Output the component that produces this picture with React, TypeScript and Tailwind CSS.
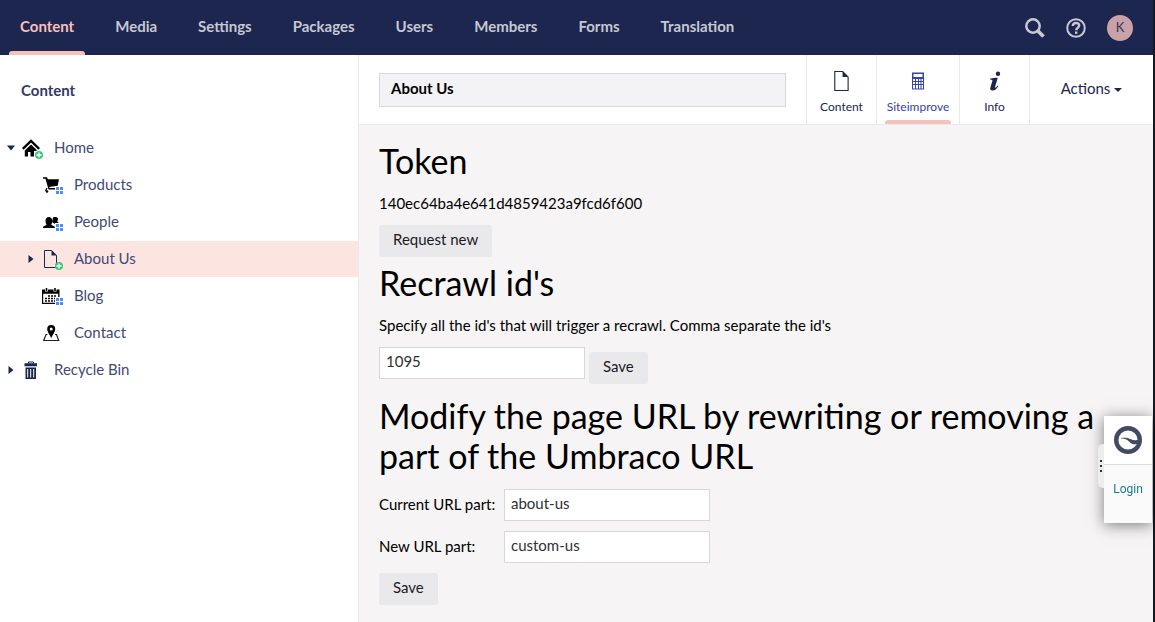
import React from "react";

type IconProps = { className?: string };

const HomeIcon = () => (
  <svg viewBox="0 0 18 18" className="size-[18px]">
    <path d="M.8 9.800 9 2l8.200 7.800" fill="none" stroke="#000" strokeWidth="2.400" />
    <path d="M9 5.500l5.500 5.200V12H12v5.500H8.500V13H6v4.500H2.800v-6Z" />
  </svg>
);
const CartIcon = () => (
  <svg viewBox="0 0 18 18" className="size-[18px]">
    <path d="M1 1.200h4l.8 2H17l-1.300 6.500-8.500 1.200.5 1.100H14v1.500H6.500L3.500 2.700H1Z" />
    <path d="M5 12l-1.500 3" stroke="#000" strokeWidth="1.200" />
    <circle cx="5" cy="15.500" r="1.300" />
  </svg>
);
const PeopleIcon = () => (
  <svg viewBox="0 0 18 18" className="size-[18px]">
    <path d="M11 4.500c2-1 4.800-.5 5 1.500.1 1.200-.7 2-.7 2.800.8.700 1.700.6 1.700 2.200h-4l-3-2Z" />
    <path d="M1 15c0-2.800 3.200-2.200 3.500-3.500C3 9.500 2.800 4 6.800 4S11 9.500 9.300 11.500c.2 1.300 3.700 1 3.700 3.500Z" />
  </svg>
);
const DocIcon = ({ className = "size-[18px]" }: IconProps) => (
  <svg viewBox="0 0 18 18" className={className}>
    <path d="M2.500.5h7l5 5v12h-12Z" fill="none" stroke="currentColor" />
    <path d="M9.500 0l5.500 5.500H9.500Z" fill="currentColor" />
  </svg>
);
const CalendarIcon = () => (
  <svg viewBox="0 0 18 18" className="size-[18px]">
    <path d="M0 2.500h17.500V17H0ZM1.200 6.800v9h15v-9Z" fillRule="evenodd" />
    <path d="M4.500 1v3.500M13 1v3.500" stroke="#fff" strokeWidth="3" />
    <path d="M4.500 1v3M13 1v3" stroke="#000" strokeWidth="1.600" />
    <path d="M6 9h9M3 11.500h12M3 14h12" stroke="#000" strokeWidth="1.600" strokeDasharray="2 1" />
  </svg>
);
const PinIcon = () => (
  <svg viewBox="0 0 18 18" className="size-[18px]">
    <path d="M5.500 10.500H4L1.700 16.500h15L14.500 10.500H13" fill="none" stroke="#222" strokeWidth="1.200" />
    <path d="M9.200 14.500C8.500 11.500 5.200 8.500 5.200 5a4 4 0 0 1 8 0c0 3.500-3.300 6.500-4 9.500Zm0-8a1.500 1.500 0 1 0 0-3 1.500 1.500 0 0 0 0 3Z" fillRule="evenodd" />
  </svg>
);
const TrashIcon = () => (
  <svg viewBox="0 0 18 18" className="size-[18px]">
    <path d="M6.500 2.500v-1.500h5v1.500" fill="none" stroke="currentColor" />
    <path d="M2.500 2.200h12.500v3H2.500ZM3.500 6.500h10.500V18H3.500ZM5.200 8v8.500h1V8Zm3 0v8.500h1V8Zm3 0v8.500h1V8Z" fill="currentColor" fillRule="evenodd" />
  </svg>
);
const CalculatorIcon = () => (
  <svg viewBox="0 0 18 18" className="size-[18px]">
    <path d="M3 .5h12v17H3ZM4.500 2v3h9V2ZM4 7v2h2V7Zm3 0v2h2V7Zm3 0v2h1.500V7Zm2.500 0v2H14V7ZM4 10v2h2v-2Zm3 0v2h2v-2Zm3 0v2h1.500v-2Zm2.500 0v2H14v-2ZM4 13v3.500h2V13Zm3 0v3.500h2V13Zm3 0v3.500h1.500V13Zm2.500 0v3.500H14V13Z" fill="currentColor" fillRule="evenodd" />
  </svg>
);
const InfoIcon = () => (
  <svg viewBox="0 0 20 20" className="size-5">
    <circle cx="13" cy="2.800" r="2.200" fill="currentColor" />
    <path d="M5.500 7.500c2.200-.2 4.500-.8 7.300-.8L10 16c-.3 1.300.8 1 2.600-1.500l.8.600c-2 3.200-3.500 4.400-5.800 4.400-2.200 0-2.700-1.300-2.200-3L7.400 9.700c.2-.9-.6-1-2.300-.9Z" fill="currentColor" />
  </svg>
);
const PlusBadge = () => (
  <svg viewBox="0 0 8 8" className="absolute -right-[3px] -bottom-0.5 size-2">
    <circle cx="4" cy="4" r="4" fill="#3cc57c" />
    <path d="M4 1.500v5M1.500 4h5" stroke="#fff" strokeWidth="1.300" />
  </svg>
);
const GridBadge = () => (
  <span className="absolute -right-[3px] bottom-0 bg-white pt-px pl-px">
    <svg viewBox="0 0 7 7" className="size-[7px]">
      <path d="M0 0h3v3H0ZM4 0h3v3H4ZM0 4h3v3H0ZM4 4h3v3H4Z" fill="#4a90f5" />
    </svg>
  </span>
);

type Node = {
  label: string;
  icon: React.ReactNode;
  level: 0 | 1;
  caret?: "down" | "right";
  badge?: React.ReactNode;
  active?: boolean;
};

const nodes: Node[] = [
  { label: "Home", icon: <HomeIcon />, level: 0, caret: "down", badge: <PlusBadge /> },
  { label: "Products", icon: <CartIcon />, level: 1, badge: <GridBadge /> },
  { label: "People", icon: <PeopleIcon />, level: 1, badge: <GridBadge /> },
  { label: "About Us", icon: <DocIcon />, level: 1, caret: "right", badge: <PlusBadge />, active: true },
  { label: "Blog", icon: <CalendarIcon />, level: 1, badge: <GridBadge /> },
  { label: "Contact", icon: <PinIcon />, level: 1 },
  { label: "Recycle Bin", icon: <TrashIcon />, level: 0, caret: "right" },
];

const Caret = ({ dir }: { dir?: "down" | "right" }) => (
  <svg viewBox="0 0 8 8" className="size-2 shrink-0 text-[#1b264f]">
    {dir === "down" && <path d="M0 1.500h8L4 6.500Z" fill="currentColor" />}
    {dir === "right" && <path d="M1.500 0v8L6.500 4Z" fill="currentColor" />}
  </svg>
);

function Tree() {
  return (
    <aside className="w-[359px] shrink-0 border-r border-[#e9e9eb] bg-white">
      <h2 className="px-[21px] pt-[23px] pb-7 text-[15px] leading-6 font-bold text-[#343b63]">Content</h2>
      <ul>
        {nodes.map((n) => (
          <li key={n.label} className="pb-px">
            <a
              href="#"
              className={`flex h-9 items-center text-[15px] text-[#414a75] ${n.level === 0 ? "pl-[7px]" : "pl-[27px]"} ${n.active ? "bg-[#fce4e1]" : ""}`}
            >
              <Caret dir={n.caret} />
              <span className="relative mr-3.5 ml-[7px] size-[18px] text-[#1b264f]">
                {n.icon}
                {n.badge}
              </span>
              <span className="pb-0.5">{n.label}</span>
            </a>
          </li>
        ))}
      </ul>
    </aside>
  );
}

const sections = ["Content", "Media", "Settings", "Packages", "Users", "Members", "Forms", "Translation"];

function TopBar() {
  return (
    <header className="flex h-[55px] items-stretch justify-between bg-[#1d264f]">
      <nav className="flex gap-px">
        {sections.map((s, i) => (
          <a
            key={s}
            href="#"
            className={`relative flex items-center px-5 pb-0.5 text-[15px] font-bold ${i === 0 ? "text-[#f5c1bc]" : "text-[#c6c8d3]"}`}
          >
            {s}
            {i === 0 && <span className="absolute inset-x-[9px] bottom-0 h-1 rounded-t-[3px] bg-[#f5c1bc]" />}
          </a>
        ))}
      </nav>
      <div className="flex items-center gap-[21px] pr-5 text-[#c6c8d3]">
        <button aria-label="Search">
          <svg viewBox="0 0 20 20" className="size-5">
            <circle cx="8" cy="8" r="6.700" fill="none" stroke="currentColor" strokeWidth="2.500" />
            <path d="M12.500 12.500l6 6" stroke="currentColor" strokeWidth="3.800" />
          </svg>
        </button>
        <button aria-label="Help">
          <svg viewBox="0 0 20 20" className="size-5">
            <circle cx="10" cy="10" r="8.800" fill="none" stroke="currentColor" strokeWidth="2" />
            <path d="M6.800 8c0-4 6.400-4 6.400-.4 0 2.200-3 2-3 4.600" fill="none" stroke="currentColor" strokeWidth="2.400" />
            <path d="M9 13.500h2.400v2.400H9Z" fill="currentColor" />
          </svg>
        </button>
        <button className="size-[26px] rounded-full bg-[#c8a2a8] text-[13px] text-[#343758]">K</button>
      </div>
    </header>
  );
}

const apps = [
  { label: "Content", icon: <DocIcon className="size-5" />, width: "w-[70px]" },
  { label: "Siteimprove", icon: <CalculatorIcon />, width: "w-[83px]", active: true },
  { label: "Info", icon: <InfoIcon />, width: "w-[70px]" },
];

function EditorHeader() {
  return (
    <div className="flex h-[70px] border-b border-[#e9e9eb] bg-white">
      <div className="flex flex-1 items-center px-5">
        <input
          aria-label="Name"
          defaultValue="About Us"
          className="h-[34px] w-full min-w-0 border border-[#d8d7d9] bg-[#f3f3f5] px-[11px] pb-1 text-[15px] font-bold text-black outline-none"
        />
      </div>
      {apps.map((a) => (
        <button
          key={a.label}
          className={`relative flex flex-col items-center border-l border-[#e9e9eb] pt-4 text-xs ${a.width} ${a.active ? "text-[#3544a5]" : "text-[#1b264f]"}`}
        >
          <span className="flex size-5 items-center justify-center">{a.icon}</span>
          <span className="mt-2 leading-4">{a.label}</span>
          {a.active && <span className="absolute inset-x-2 bottom-0 h-1 rounded-t-[3px] bg-[#f5c1bc]" />}
        </button>
      ))}
      <button className="flex w-[124px] items-center justify-center gap-1 border-l border-[#e9e9eb] pb-0.5 text-[15px] text-[#1b264f]">
        Actions
        <svg viewBox="0 0 8 4" className="mt-0.5 h-1 w-2">
          <path d="M0 0h8L4 4Z" fill="currentColor" />
        </svg>
      </button>
    </div>
  );
}

const inputClass = "h-8 w-[206px] border border-[#d8d7d9] bg-white px-1.5 pb-1 text-[15px] text-[#303033] outline-none";
const buttonClass = "h-8 rounded-[3px] bg-[#e9e9eb] px-3.5 pb-1 text-[15px] text-[#1b1b1f]";
const headingClass = "text-[34px] leading-10";

function SiteimprovePanel() {
  return (
    <main className="flex-1 bg-[#f6f4f5] px-5 pt-4 pb-4 text-[15px] leading-5 text-black">
      <h1 className={headingClass}>Token</h1>
      <p className="my-3">140ec64ba4e641d4859423a9fcd6f600</p>
      <button className={buttonClass}>Request new</button>
      <h1 className={`mt-1.5 ${headingClass}`}>Recrawl id's</h1>
      <label htmlFor="recrawl" className="my-3 block">
        Specify all the id's that will trigger a recrawl. Comma separate the id's
      </label>
      <div className="flex items-start gap-1">
        <input id="recrawl" defaultValue="1095" className={inputClass} />
        <button className={`mt-[5px] ${buttonClass}`}>Save</button>
      </div>
      <h1 className={`mt-3 ${headingClass}`}>Modify the page URL by rewriting or removing a part of the Umbraco URL</h1>
      <div className="mt-[13px] grid grid-cols-[125px_1fr] items-center gap-y-2.5">
        <label htmlFor="current" className="pb-0.5">Current URL part:</label>
        <input id="current" defaultValue="about-us" className={inputClass} />
        <label htmlFor="next" className="pb-0.5">New URL part:</label>
        <input id="next" defaultValue="custom-us" className={inputClass} />
      </div>
      <button className={`mt-2.5 ${buttonClass}`}>Save</button>
    </main>
  );
}

function LoginWidget() {
  return (
    <div className="fixed top-[416px] right-[3px] w-12">
      <div className="bg-[#fafafa] shadow-[0_2px_14px_rgba(0,0,0,0.5)]">
        <div className="flex h-[49px] items-center justify-center border-b border-[#dcdcdc] bg-white">
          <svg viewBox="0 0 28 28" className="size-7">
            <circle cx="14" cy="14" r="11.800" fill="none" stroke="#414b64" strokeWidth="4.400" />
            <path d="M7 12c4.500-.8 7.500-.2 10 1.200 2.500 1.300 5 1.300 8.500.3v3.800c-3.500 1.500-7 1.500-9.500-.8-2.500-2.400-4.500-3.900-9-3.900Z" fill="#414b64" />
          </svg>
        </div>
        <button className="block h-[58px] w-full pb-2.5 font-[Roboto,sans-serif] text-xs text-[#1c7a90]">Login</button>
      </div>
      <div className="absolute top-7 -left-1.5 flex h-11 w-1.5 flex-col items-center justify-center gap-[3px] rounded-l-[5px] bg-[#ededed]">
        <i className="size-0.5 bg-[#333]" />
        <i className="size-0.5 bg-[#333]" />
        <i className="size-0.5 bg-[#333]" />
      </div>
    </div>
  );
}

export default function App() {
  return (
    <div className="flex min-h-screen flex-col border-r-2 border-[#14181f] bg-white font-[Lato,sans-serif]">
      <TopBar />
      <div className="flex flex-1">
        <Tree />
        <div className="flex min-w-0 flex-1 flex-col">
          <EditorHeader />
          <SiteimprovePanel />
        </div>
      </div>
      <LoginWidget />
    </div>
  );
}
